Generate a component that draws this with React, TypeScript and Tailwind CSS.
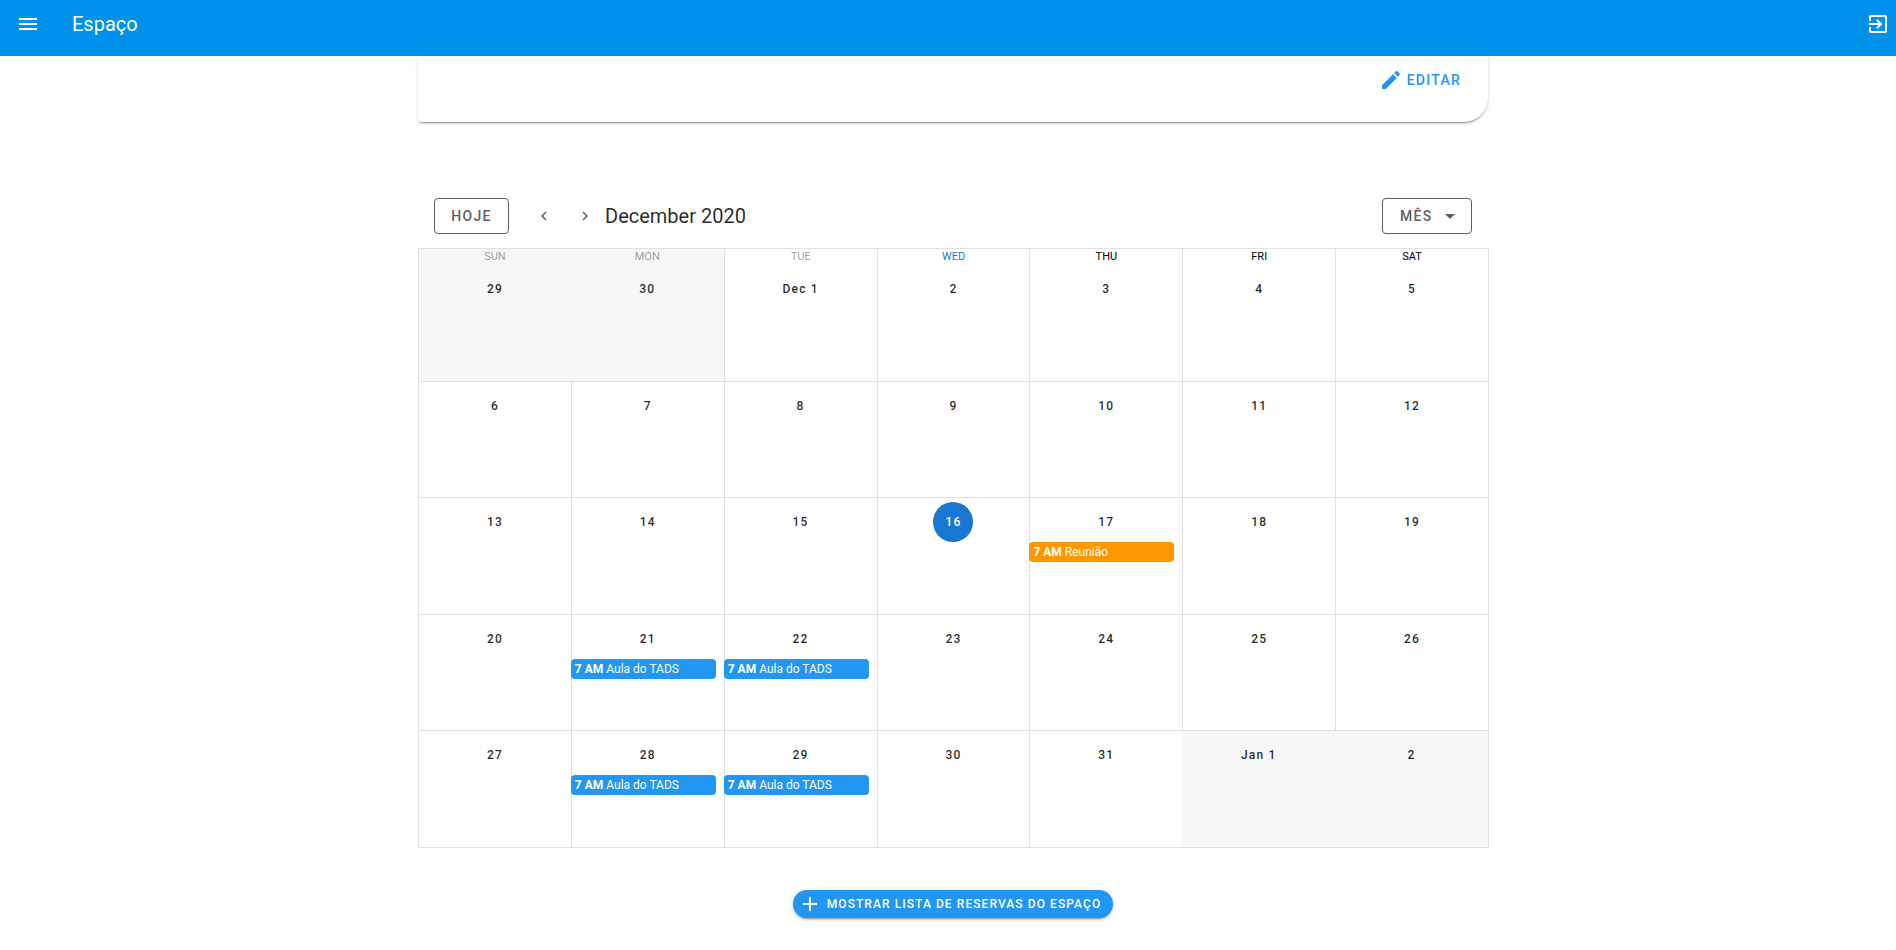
import React from 'react';

type CalEvent = { label: string; color: string };
type Day = { label: string; outside?: boolean; today?: boolean; noLine?: boolean; event?: CalEvent };

const AULA: CalEvent = { label: 'Aula do TADS', color: 'bg-[#2196f3]' };
const REUNIAO: CalEvent = { label: 'Reunião', color: 'bg-[#ff9800]' };

const WEEKDAYS = [
  { name: 'SUN', color: 'text-black/40' },
  { name: 'MON', color: 'text-black/40' },
  { name: 'TUE', color: 'text-black/40' },
  { name: 'WED', color: 'text-[#1976d2]' },
  { name: 'THU', color: 'text-black' },
  { name: 'FRI', color: 'text-black' },
  { name: 'SAT', color: 'text-black' },
];

const DAYS: Day[] = [
  { label: '29', outside: true },
  { label: '30', outside: true, noLine: true },
  { label: 'Dec 1' }, { label: '2' }, { label: '3' }, { label: '4' }, { label: '5' },
  { label: '6' }, { label: '7' }, { label: '8' }, { label: '9' }, { label: '10' }, { label: '11' }, { label: '12' },
  { label: '13' }, { label: '14' }, { label: '15' }, { label: '16', today: true },
  { label: '17', event: REUNIAO }, { label: '18' }, { label: '19' },
  { label: '20' }, { label: '21', event: AULA }, { label: '22', event: AULA }, { label: '23' }, { label: '24' }, { label: '25' }, { label: '26' },
  { label: '27' }, { label: '28', event: AULA }, { label: '29', event: AULA }, { label: '30' }, { label: '31' },
  { label: 'Jan 1', outside: true, noLine: true },
  { label: '2', outside: true, noLine: true },
];

const Icon = ({ d, className }: { d: string; className: string }) => (
  <svg viewBox="0 0 24 24" fill="currentColor" className={className}>
    <path d={d} />
  </svg>
);

const MENU = 'M3,6H21V8H3V6M3,11H21V13H3V11M3,16H21V18H3V16Z';
const EXIT = 'M19,3H5C3.89,3 3,3.89 3,5V9H5V5H19V19H5V15H3V19A2,2 0 0,0 5,21H19A2,2 0 0,0 21,19V5C21,3.89 20.1,3 19,3M10.08,15.58L11.5,17L16.5,12L11.5,7L10.08,8.41L12.67,11H3V13H12.67L10.08,15.58Z';
const PENCIL = 'M20.71,7.04C21.1,6.65 21.1,6 20.71,5.63L18.37,3.29C18,2.9 17.35,2.9 16.96,3.29L15.12,5.12L18.87,8.87M3,17.25V21H6.75L17.81,9.93L14.06,6.18L3,17.25Z';
const LEFT = 'M15.41,16.58L10.83,12L15.41,7.41L14,6L8,12L14,18L15.41,16.58Z';
const RIGHT = 'M8.59,16.58L13.17,12L8.59,7.41L10,6L16,12L10,18L8.59,16.58Z';
const DOWN = 'M7,10L12,15L17,10H7Z';
const PLUS = 'M19,13H13V19H11V13H5V11H11V5H13V11H19V13Z';

const DayCell = ({ day, index }: { day: Day; index: number }) => {
  const weekday = index < 7 ? WEEKDAYS[index] : null;
  return (
    <div
      className={`min-w-0 border-b border-[#e0e0e0] ${day.noLine ? '' : 'border-l'} ${day.outside ? 'bg-[#f7f7f7]' : ''}`}
    >
      {weekday && (
        <div className={`h-[16px] text-center text-[11px] leading-[16px] ${weekday.color}`}>{weekday.name}</div>
      )}
      <div className="mt-1 flex justify-center">
        <span
          className={`flex h-10 min-w-10 items-center justify-center rounded-full px-1 text-xs font-medium tracking-[0.1em] ${
            day.today ? 'bg-[#1976d2] text-white' : 'text-black/85'
          }`}
        >
          {day.label}
        </span>
      </div>
      {day.event && (
        <div
          className={`${day.noLine ? '' : '-ml-px'} h-5 w-[145px] truncate rounded pl-1 text-xs leading-5 text-white ${day.event.color}`}
        >
          <strong className="font-bold">7 AM</strong> {day.event.label}
        </div>
      )}
    </div>
  );
};

export default function App() {
  return (
    <div className="h-[950px] overflow-hidden bg-white font-['Roboto',sans-serif] text-black/85">
      <header className="flex h-14 items-start justify-between bg-[#0091ea] pl-1 text-white">
        <div className="flex h-12 items-center">
          <button className="flex h-12 w-12 items-center justify-center">
            <Icon d={MENU} className="h-6 w-6" />
          </button>
          <h1 className="ml-5 text-xl font-normal">Espaço</h1>
        </div>
        <button className="flex h-12 w-9 items-center justify-center">
          <Icon d={EXIT} className="h-6 w-6" />
        </button>
      </header>

      <main className="ml-[418px] w-[1070px]">
        <section className="flex h-[66px] items-start justify-end rounded-br-[24px] rounded-bl bg-white pt-1.5 pr-[19px] shadow-[0_2px_2px_-1px_rgba(0,0,0,0.4),0_1px_4px_0_rgba(0,0,0,0.12)]">
          <button className="flex h-9 items-center px-2 text-sm font-medium tracking-[0.0892857em] text-[#2196f3]">
            <Icon d={PENCIL} className="mr-1 h-6 w-6" />
            EDITAR
          </button>
        </section>

        <div className="mt-[76px] flex h-9 items-center px-4 text-[#5f5f5f]">
          <button className="mr-[21px] flex h-9 w-[75px] items-center justify-center rounded border border-[#616161] text-sm font-medium tracking-[0.0892857em]">
            HOJE
          </button>
          <button className="flex h-7 w-7 items-center justify-center">
            <Icon d={LEFT} className="h-[18px] w-[18px]" />
          </button>
          <button className="ml-[13px] flex h-7 w-7 items-center justify-center">
            <Icon d={RIGHT} className="h-[18px] w-[18px]" />
          </button>
          <div className="ml-[6px] text-xl font-normal text-black/85">December 2020</div>
          <button className="ml-auto flex h-9 w-[90px] items-center rounded border border-[#616161] pl-[17px] text-sm font-medium tracking-[0.0892857em]">
            MÊS
            <Icon d={DOWN} className="ml-1.5 h-6 w-6" />
          </button>
        </div>

        <div className="mt-[14px] -mr-px grid grid-cols-7 grid-rows-[133px_116px_117px_116px_117px] border-t border-r border-[#e0e0e0]">
          {DAYS.map((day, i) => (
            <DayCell key={i} day={day} index={i} />
          ))}
        </div>

        <div className="mt-[42px] flex justify-center">
          <button className="flex h-7 items-center rounded-full bg-[#2196f3] pr-3 pl-[5px] text-xs font-medium tracking-[0.0892857em] text-white shadow-[0_3px_1px_-2px_rgba(0,0,0,0.2),0_2px_2px_0_rgba(0,0,0,0.14),0_1px_5px_0_rgba(0,0,0,0.12)]">
            <Icon d={PLUS} className="mr-[5px] h-6 w-6" />
            MOSTRAR LISTA DE RESERVAS DO ESPAÇO
          </button>
        </div>
      </main>
    </div>
  );
}
